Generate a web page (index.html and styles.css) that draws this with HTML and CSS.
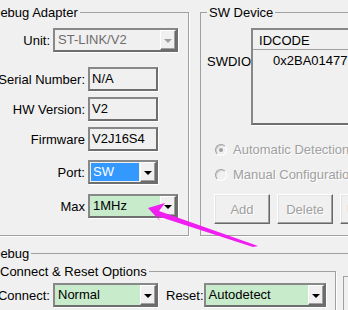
FILE: index.html
```html
<!DOCTYPE html>
<html lang="en">
<head>
    <meta charset="UTF-8">
    <title>Target Driver Setup</title>
    <link rel="stylesheet" href="styles.css">
</head>
<body>
    <div class="dialog">
        <div class="top-row">
            <fieldset class="group group-adapter">
                <legend>Debug Adapter</legend>
                <div class="row row-unit">
                    <label class="lbl lbl-short">Unit:</label>
                    <div class="combo combo-unit disabled">
                        <span class="combo-text">ST-LINK/V2</span>
                        <span class="drop"><i class="caret"></i></span>
                    </div>
                </div>
                <div class="row row-serial">
                    <label class="lbl">Serial Number:</label>
                    <div class="field">N/A</div>
                </div>
                <div class="row row-hw">
                    <label class="lbl">HW Version:</label>
                    <div class="field">V2</div>
                </div>
                <div class="row row-fw">
                    <label class="lbl">Firmware</label>
                    <div class="field">V2J16S4</div>
                </div>
                <div class="row row-port">
                    <label class="lbl">Port:</label>
                    <div class="combo combo-port">
                        <span class="combo-text selected">SW</span>
                        <span class="drop"><i class="caret"></i></span>
                    </div>
                </div>
                <div class="row row-max">
                    <label class="lbl">Max</label>
                    <div class="combo combo-max green">
                        <span class="combo-text">1MHz</span>
                        <span class="drop"><i class="caret"></i></span>
                    </div>
                </div>
            </fieldset>

            <fieldset class="group group-device">
                <legend>SW Device</legend>
                <div class="device-row">
                    <span class="device-label">SWDIO</span>
                    <div class="list">
                        <div class="list-head">IDCODE</div>
                        <div class="list-item">0x2BA01477</div>
                    </div>
                </div>
                <div class="radio radio-first">
                    <span class="radio-dot"><span class="radio-mark"></span></span>
                    Automatic Detection
                </div>
                <div class="radio radio-second">
                    <span class="radio-dot"></span>
                    Manual Configuration
                </div>
                <div class="btn-row">
                    <button class="btn" type="button" disabled>Add</button>
                    <button class="btn" type="button" disabled>Delete</button>
                    <button class="btn" type="button" disabled>Update</button>
                </div>
            </fieldset>
        </div>

        <fieldset class="group group-debug">
            <legend>Debug</legend>
            <div class="debug-row">
                <fieldset class="group group-options">
                    <legend>Connect &amp; Reset Options</legend>
                    <div class="row row-connect">
                        <label class="lbl lbl-connect">Connect:</label>
                        <div class="combo combo-connect green">
                            <span class="combo-text">Normal</span>
                            <span class="drop"><i class="caret"></i></span>
                        </div>
                        <label class="lbl-reset">Reset:</label>
                        <div class="combo combo-reset green">
                            <span class="combo-text">Autodetect</span>
                            <span class="drop"><i class="caret"></i></span>
                        </div>
                    </div>
                </fieldset>
                <fieldset class="group group-next"></fieldset>
            </div>
        </fieldset>
    </div>

    <!-- annotation arrow pointing at the Max clock combo -->
    <svg class="arrow" width="348" height="310" viewBox="0 0 348 310">
        <polygon points="148,208 165,203 159,211 258,246 253,247 157,216 160,221" fill="#f01ef0"/>
    </svg>
</body>
</html>
```

FILE: styles.css
```css
html,
body {
    margin: 0;
    padding: 0;
    width: 348px;
    height: 310px;
    overflow: hidden;
}

body {
    position: relative;
    background-color: #f0f0f0;
    font-family: "Liberation Sans", Arial, sans-serif;
    font-size: 13px;
    line-height: 15px;
    color: #000;
}

.dialog {
    margin-left: -18px;
    padding-top: 5px;
    width: 440px;
}

.top-row {
    display: flex;
    gap: 11px;
}

/* group boxes */
.group {
    margin: 0;
    padding: 0;
    min-width: 0;
    box-sizing: border-box;
    border: 1px solid #a0a0a0;
    box-shadow: 1px 1px 0 #fff;
}

.group legend {
    margin-left: 6px;
    padding: 0 2px;
}

.group-adapter {
    width: 207px;
    height: 231px;
    flex: none;
}

.group-device {
    width: 200px;
    height: 231px;
    flex: none;
}

/* label + control rows */
.row {
    display: flex;
    align-items: center;
    height: 24px;
}

.row-unit {
    margin-top: 8px;
}

.row-serial {
    margin-top: 15px;
}

.row-hw,
.row-fw {
    margin-top: 6px;
}

.row-port {
    margin-top: 9px;
}

.row-max {
    margin-top: 10px;
}

.lbl {
    flex: none;
    width: 102px;
    margin-right: 3px;
    text-align: right;
}

.lbl-short {
    width: 67px;
}

.field,
.combo,
.list {
    box-sizing: border-box;
    border: 2px solid #7a7a7a;
    border-color: #888 #6e6e6e #6e6e6e #888;
    box-shadow: 1px 1px 0 #fff;
}

.field {
    width: 70px;
    height: 24px;
    padding-left: 2px;
    line-height: 20px;
}

.combo {
    display: flex;
    height: 24px;
    flex: none;
}

.combo-text {
    flex: 1;
    padding-left: 3px;
    line-height: 20px;
    white-space: nowrap;
    overflow: hidden;
}

.combo-text.selected {
    margin: 1px 1px 1px 1px;
    padding-left: 2px;
    line-height: 18px;
    background-color: #3399ff;
    color: #fff;
}

.combo-unit {
    width: 125px;
}

.combo-port {
    width: 70px;
}

.combo-max {
    width: 90px;
}

.green {
    background-color: #c7ebcb;
}

.disabled .combo-text {
    color: #6d6d6d;
}

.drop {
    box-sizing: border-box;
    display: flex;
    align-items: center;
    justify-content: center;
    width: 16px;
    height: 20px;
    background-color: #f0f0f0;
    border: 1px solid;
    border-color: #fff #696969 #696969 #fff;
    box-shadow: inset -1px -1px 0 #a0a0a0;
}

.caret {
    display: block;
    width: 0;
    height: 0;
    border-left: 4px solid transparent;
    border-right: 4px solid transparent;
    border-top: 4px solid #000;
    margin-top: 1px;
}

.disabled .caret {
    border-top-color: #a0a0a0;
}

/* SW device list */
.device-row {
    display: flex;
    margin-top: 8px;
}

.device-label {
    box-sizing: border-box;
    width: 52px;
    padding-left: 6px;
    margin-top: 26px;
}

.list {
    width: 160px;
    height: 97px;
}

.list-head {
    height: 20px;
    padding: 3px 0 0 6px;
    box-sizing: border-box;
    border-bottom: 1px solid #a0a0a0;
}

.list-item {
    padding: 3px 0 0 20px;
}

/* radios */
.radio {
    display: flex;
    align-items: center;
    height: 15px;
    padding-left: 14px;
    color: #a0a0a0;
    text-shadow: 1px 1px 0 #fff;
    white-space: nowrap;
}

.radio-first {
    margin-top: 17px;
}

.radio-second {
    margin-top: 10px;
}

.radio-dot {
    box-sizing: border-box;
    display: flex;
    align-items: center;
    justify-content: center;
    width: 12px;
    height: 12px;
    margin-right: 6px;
    border-radius: 50%;
    border: 1px solid;
    border-color: #a0a0a0 #fff #fff #a0a0a0;
    background-color: #f0f0f0;
    box-shadow: inset 1px 1px 0 #d0d0d0;
}

.radio-mark {
    width: 4px;
    height: 4px;
    border-radius: 50%;
    background-color: #a0a0a0;
}

/* buttons */
.btn-row {
    display: flex;
    gap: 7px;
    margin: 12px 0 0 13px;
}

.btn {
    flex: none;
    box-sizing: border-box;
    width: 56px;
    height: 30px;
    padding: 0;
    font: inherit;
    color: #a0a0a0;
    text-shadow: 1px 1px 0 #fff;
    background-color: #f0f0f0;
    border: 1px solid;
    border-color: #fff #696969 #696969 #fff;
    box-shadow: inset -1px -1px 0 #a0a0a0, inset 1px 1px 0 #e3e3e3;
}

/* debug section */
.group-debug {
    margin-top: 10px;
    width: 440px;
    height: 100px;
}

.debug-row {
    display: flex;
    gap: 7px;
    margin: 3px 0 0 8px;
}

.group-options {
    flex: none;
    width: 345px;
    height: 70px;
}

.group-next {
    flex: none;
    width: 60px;
    height: 60px;
    margin-top: 12px;
}

.row-connect {
    margin-top: 4px;
}

.lbl-connect {
    width: 58px;
}

.combo-connect {
    width: 105px;
}

.lbl-reset {
    margin-left: 8px;
}

.combo-reset {
    width: 122px;
}

.arrow {
    position: absolute;
    left: 0;
    top: 0;
    pointer-events: none;
}
```
